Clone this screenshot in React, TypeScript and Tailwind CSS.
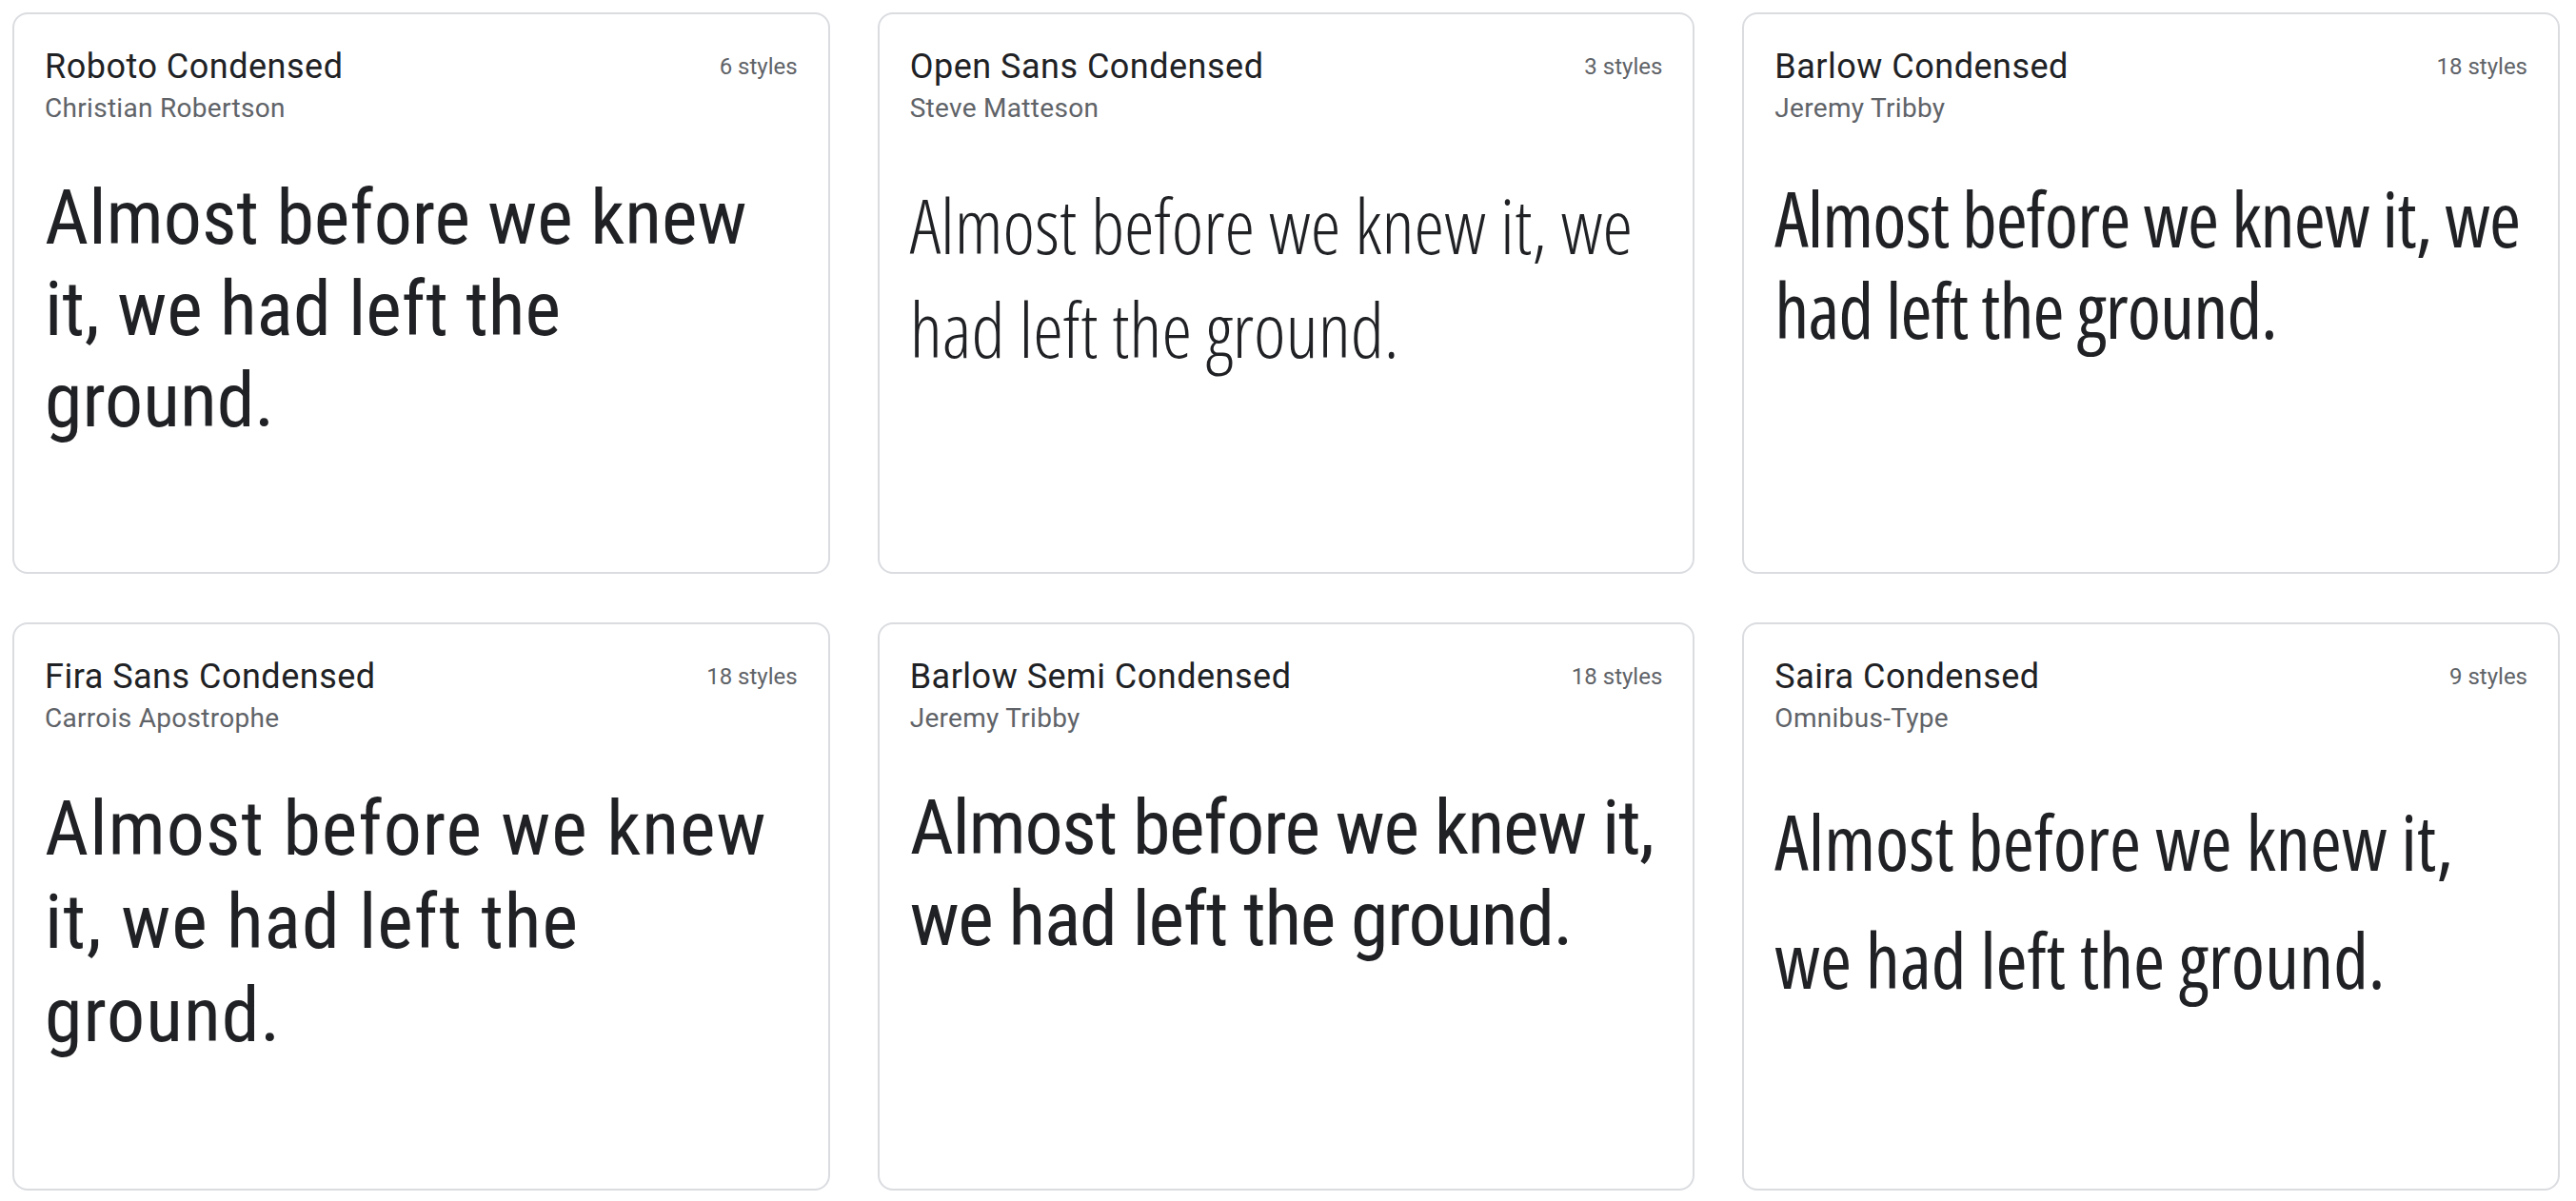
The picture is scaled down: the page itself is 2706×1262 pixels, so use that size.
import React from 'react';

type FontCard = {
  name: string;
  designer: string;
  styles: string;
  sample: string;
};

const fonts: FontCard[] = [
  {
    name: 'Roboto Condensed',
    designer: 'Christian Robertson',
    styles: '6 styles',
    sample: "font-['Roboto_Condensed',sans-serif] leading-[96px]",
  },
  {
    name: 'Open Sans Condensed',
    designer: 'Steve Matteson',
    styles: '3 styles',
    sample: "font-['Open_Sans',sans-serif] font-stretch-condensed font-light leading-[109px]",
  },
  {
    name: 'Barlow Condensed',
    designer: 'Jeremy Tribby',
    styles: '18 styles',
    sample: "font-['Open_Sans',sans-serif] font-stretch-condensed font-medium tracking-[-0.9px] leading-[96px]",
  },
  {
    name: 'Fira Sans Condensed',
    designer: 'Carrois Apostrophe',
    styles: '18 styles',
    sample: "font-['Roboto_Condensed',sans-serif] tracking-[1px] leading-[98px]",
  },
  {
    name: 'Barlow Semi Condensed',
    designer: 'Jeremy Tribby',
    styles: '18 styles',
    sample: "font-['Roboto_Condensed',sans-serif] tracking-[-1.3px] leading-[96px]",
  },
  {
    name: 'Saira Condensed',
    designer: 'Omnibus-Type',
    styles: '9 styles',
    sample: "font-['Open_Sans',sans-serif] font-stretch-condensed leading-[124px]",
  },
];

const FontCardView: React.FC<{ font: FontCard }> = ({ font }) => (
  <div className="bg-white rounded-[16px] border-2 border-[#dadce0] p-[32px] pt-[31px] flex flex-col min-w-0">
    <div className="flex justify-between items-start">
      <div className="flex flex-col font-['Roboto',sans-serif]">
        <span className="text-[36px] leading-[48px] tracking-[0.5px] text-[#202124]">{font.name}</span>
        <span className="text-[28px] leading-[40px] tracking-[0.3px] text-[#5f6368]">{font.designer}</span>
      </div>
      <span className="font-['Roboto',sans-serif] text-[24px] leading-[48px] text-[#5f6368] whitespace-nowrap">
        {font.styles}
      </span>
    </div>
    <p className={`mt-[47px] text-[80px] text-[#202124] ${font.sample}`}>
      Almost before we knew it, we had left the ground.
    </p>
  </div>
);

export default function App() {
  return (
    <div className="bg-white min-h-screen pl-[13px] pr-[17px] pt-[13px]">
      <div className="grid grid-cols-3 grid-rows-[590px_597px] gap-x-[50px] gap-y-[51px]">
        {fonts.map((f) => (
          <FontCardView key={f.name} font={f} />
        ))}
      </div>
    </div>
  );
}
